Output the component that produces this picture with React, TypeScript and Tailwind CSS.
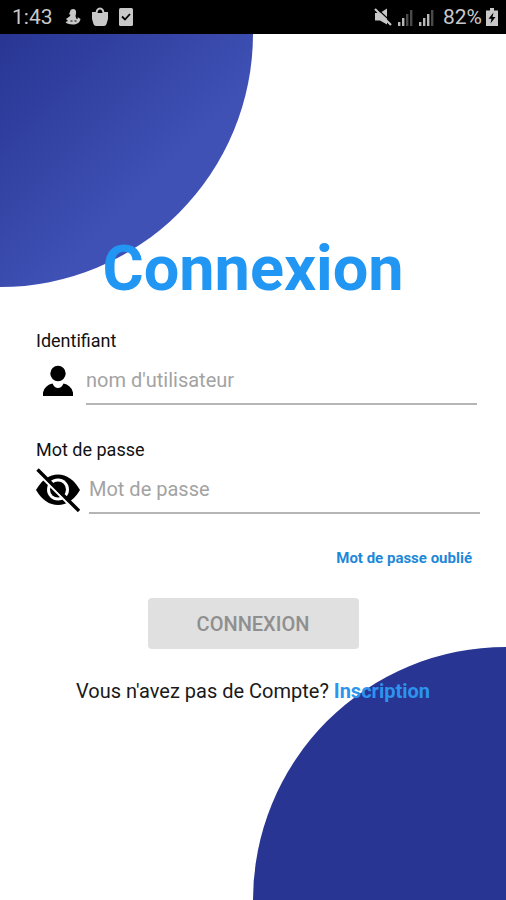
import type { ReactNode } from "react";

function SignalIcon({ bars }: { bars: number }) {
  return (
    <svg viewBox="0 0 16 18" className="h-[18px] w-4" aria-hidden="true">
      {[0, 1, 2, 3].map((i) => (
        <rect
          key={i}
          x={i * 4}
          y={14 - i * 4}
          width="2.4"
          height={4 + i * 4}
          fill={i < bars ? "#b8b8b8" : "#4a4a4a"}
        />
      ))}
    </svg>
  );
}

function StatusBar() {
  return (
    <div className="flex h-[34px] shrink-0 items-center justify-between bg-black pr-2 pl-3 text-[21px] leading-none text-[#c8c8c8]">
      <div className="flex items-center">
        <span>1:43</span>
        <svg viewBox="0 0 16 18" className="ml-3 h-[18px] w-4" fill="currentColor" aria-hidden="true">
          <path d="M5 4 C5 2 6.5 1 8 1 C10.5 1 11.5 3 11 5.5 L10.5 8 L11.5 11 L13 10.5 L12.5 9 L15.5 11 C15 14 12.5 16.5 8 16.5 C4 16.5 1 15.5 0.5 14 L3 13 L1 11 L4.5 8.5 L5.5 7 L4 6 Z" />
          <path d="M5.5 13 H7.5 M9.5 13 H11.5" stroke="#000" strokeWidth="1" fill="none" />
        </svg>
        {/* Shopping bag */}
        <svg viewBox="0 0 18 20" className="ml-2.5 h-5 w-[18px]" aria-hidden="true">
          <path d="M1 5 H17 V12 L15.5 17 Q14.7 19 13 19 H5 Q3.3 19 2.5 17 L1 12 Z" fill="currentColor" />
          <path d="M5.5 7 Q5.5 1.500 9 1.500 Q12.500 1.500 12.5 7" fill="none" stroke="currentColor" strokeWidth="2" />
          <path d="M6.5 6 Q6.5 3.5 9 3.5 Q11.5 3.5 11.5 6 Z" fill="#000" />
        </svg>
        {/* Checked task */}
        <svg viewBox="0 0 14 18" className="ml-2.5 h-[18px] w-3.5" aria-hidden="true">
          <rect width="14" height="18" rx="1.5" fill="currentColor" />
          <path d="M3 8.5 L6 11.5 L11 6" fill="none" stroke="#000" strokeWidth="1.8" />
        </svg>
      </div>
      <div className="flex items-center">
        {/* Muted speaker */}
        <svg viewBox="0 0 18 18" className="h-[18px] w-[18px]" aria-hidden="true">
          <path d="M1 5 H6 L13 0.5 V16.5 L6 12.5 H1 Z" fill="currentColor" />
          <path d="M3 0.5 L18 14.5" stroke="#000" strokeWidth="1.2" />
          <path d="M1 1 L17 17" stroke="currentColor" strokeWidth="2.2" />
        </svg>
        <span className="ml-1.5 flex gap-[5px]">
          <SignalIcon bars={2} />
          <SignalIcon bars={3} />
        </span>
        <span className="ml-2">82%</span>
        <svg viewBox="0 0 12 18" className="ml-1 h-[18px] w-3" aria-hidden="true">
          <path d="M4 0 H8 V2.5 H12 V18 H0 V2.5 H4 Z" fill="currentColor" />
          <path d="M7.5 4.5 L2.5 10.8 H5.5 L4.5 15.5 L9.5 9 H6.5 Z" fill="#000" />
        </svg>
      </div>
    </div>
  );
}

function UserIcon() {
  return (
    <svg viewBox="0 0 30 32" className="mx-[7px] h-8 w-[30px] shrink-0" aria-hidden="true">
      <circle cx="15" cy="8.5" r="7.7" />
      <path d="M0 31 V27.5 Q0.500 24 3.500 21.500 Q6 19 9.500 18.500 Q11.500 23 15 23 Q18.500 23 20.500 18.500 Q24 19 26.500 21.500 Q29.500 24 30 27.5 V31 Z" />
    </svg>
  );
}

function EyeOffIcon() {
  return (
    <svg viewBox="0 0 44 44" className="h-11 w-11 shrink-0" aria-hidden="true">
      <path d="M0 22 Q9 6.5 22 6.5 Q35 6.5 44 22 Q35 37 22 37 Q9 37 0 22 Z" />
      <circle cx="22" cy="21.5" r="11" fill="#fff" />
      <circle cx="22" cy="21.5" r="8" />
      <path d="M15.5 17 Q18 15.5 19.5 17.5 L18 20 Z" fill="#fff" />
      <path d="M0 3.5 L41 44.5" stroke="#fff" strokeWidth="2.5" />
      <path d="M1.5 1.5 L43 43" stroke="#000" strokeWidth="3.4" />
    </svg>
  );
}

type FieldProps = {
  id: string;
  label: string;
  placeholder: string;
  type?: string;
  children: ReactNode;
};

function Field({ id, label, placeholder, type = "text", children }: FieldProps) {
  return (
    <div>
      <label htmlFor={id} className="block text-[18px] leading-6 text-[#111]">
        {label}
      </label>
      <div className="mt-1 flex items-center">
        {children}
        <input
          id={id}
          type={type}
          placeholder={placeholder}
          className="h-12 min-w-0 flex-1 border-b-2 border-[#b5b5b5] bg-transparent text-[20px] outline-none placeholder:text-[#a3a3a3]"
        />
      </div>
    </div>
  );
}

export default function App() {
  return (
    <div className="relative flex min-h-screen flex-col overflow-hidden bg-white font-[Roboto,sans-serif]">
      <StatusBar />
      <main className="relative flex flex-1 flex-col">
        {/* Corner circles */}
        <div className="absolute top-0 left-0 aspect-square w-1/2 rounded-br-full bg-linear-to-br from-[#283593] to-[#3f51b5] to-60%" />
        <div className="absolute right-0 bottom-0 aspect-square w-1/2 rounded-tl-full bg-[#283593]" />

        <h1 className="relative mt-[195px] text-center text-[63px] leading-20 font-bold text-[#2196f3]">
          Connexion
        </h1>
        <form className="relative flex flex-col">
          <div className="mt-5 pr-[29px] pl-9">
            <Field id="username" label="Identifiant" placeholder="nom d'utilisateur">
              <span className="mr-1.5">
                <UserIcon />
              </span>
            </Field>
          </div>
          <div className="mt-[33px] pr-[26px] pl-9">
            <Field id="password" label="Mot de passe" placeholder="Mot de passe" type="password">
              <span className="mr-[9px]">
                <EyeOffIcon />
              </span>
            </Field>
          </div>
          <a href="#" className="mt-8 mr-[34px] self-end text-[15px] leading-6 font-bold text-[#1e88d8]">
            Mot de passe oublié
          </a>
          <button
            type="button"
            className="mt-7 h-[51px] w-[211px] self-center rounded-sm bg-[#e0e0e0] text-[20px] font-medium text-[#8f8f8f]"
          >
            CONNEXION
          </button>
        </form>
        <p className="relative mt-[30px] text-center text-[20px] leading-6 text-[#1a1a1a]">
          Vous n'avez pas de Compte?{" "}
          <a href="#" className="font-bold text-[#2d94ee]">
            Inscription
          </a>
        </p>
      </main>
    </div>
  );
}
